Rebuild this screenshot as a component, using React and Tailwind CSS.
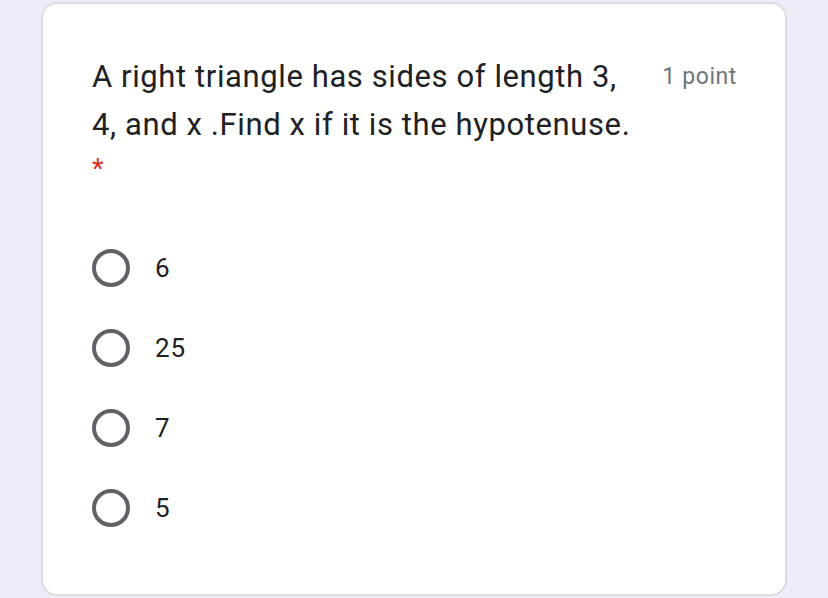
export default function App() {
  const options = ["6", "25", "7", "5"];

  return (
    <div className="h-[598px] w-[828px] overflow-hidden bg-[#f0ebf8] pt-[2px] pl-[41px]" style={{ fontFamily: "Roboto, 'Noto Sans', sans-serif" }}>
      <div className="h-[594px] w-[746px] rounded-[16px] border-2 border-[#dadce0] bg-white pl-[49px] pr-[48px] pt-[49px]">
        {/* question header */}
        <div className="flex items-start justify-between">
          <div className="w-[545px] text-[31px] leading-[48px] tracking-[0.6px] text-[#202124]">
            A right triangle has sides of length 3, 4, and x .Find x if it is the hypotenuse.
            <div className="mt-[6px] text-[27px] leading-[28px] text-[#d93025]">*</div>
          </div>
          <div className="pt-[10px] text-[23px] leading-[28px] tracking-[0.6px] text-[#70757a]">1 point</div>
        </div>

        {/* options */}
        <div className="mt-[64px] flex flex-col gap-[40px]">
          {options.map((o) => (
            <label key={o} className="flex h-[40px] items-center pt-[2px]">
              <span className="h-[38px] w-[38px] rounded-full border-[4px] border-[#5f6368]" />
              <span className="ml-[25px] text-[26px] tracking-[1px] text-[#202124]">{o}</span>
            </label>
          ))}
        </div>
      </div>
    </div>
  );
}
